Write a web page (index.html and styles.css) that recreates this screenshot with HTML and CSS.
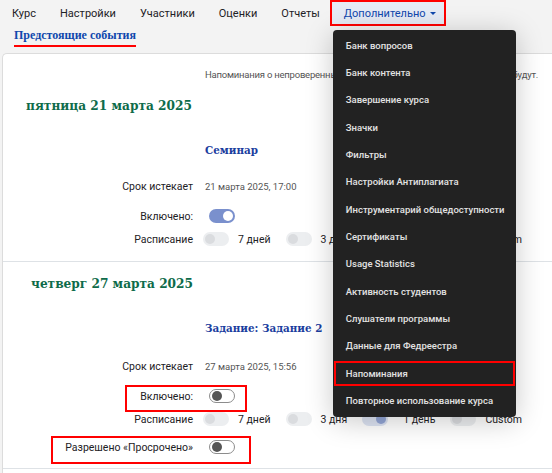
FILE: index.html
```html
<!DOCTYPE html>
<html lang="ru">
<head>
<meta charset="utf-8">
<title>Предстоящие события</title>
<link rel="stylesheet" href="styles.css">
</head>
<body>
<div class="page">
  <nav class="secnav">
    <ul class="tabs">
      <li class="tab">Курс</li>
      <li class="tab">Настройки</li>
      <li class="tab">Участники</li>
      <li class="tab">Оценки</li>
      <li class="tab">Отчеты</li>
      <li class="tab tab-more">Дополнительно <span class="caret"></span>
        <ul class="menu">
          <li class="menu-item">Банк вопросов</li>
          <li class="menu-item">Банк контента</li>
          <li class="menu-item">Завершение курса</li>
          <li class="menu-item">Значки</li>
          <li class="menu-item">Фильтры</li>
          <li class="menu-item">Настройки Антиплагиата</li>
          <li class="menu-item">Инструментарий общедоступности</li>
          <li class="menu-item">Сертификаты</li>
          <li class="menu-item">Usage Statistics</li>
          <li class="menu-item">Активность студентов</li>
          <li class="menu-item">Слушатели программы</li>
          <li class="menu-item">Данные для Федреестра</li>
          <li class="menu-item menu-item-hl">Напоминания</li>
          <li class="menu-item">Повторное использование курса</li>
        </ul>
      </li>
    </ul>
    <div class="tertiary"><span class="upcoming">Предстоящие события</span></div>
  </nav>

  <main class="card">
    <p class="notice">Напоминания о непроверенных заданиях, у которых уже истёк срок, не будут.</p>

    <h2 class="day">пятница 21 марта 2025</h2>
    <h3 class="event">Семинар</h3>
    <div class="row row-due">
      <span class="label">Срок истекает</span>
      <span class="value">21 марта 2025, 17:00</span>
    </div>
    <div class="row row-enabled">
      <span class="label">Включено:</span>
      <span class="value"><span class="tgl tgl-on"></span></span>
    </div>
    <div class="row row-sched">
      <span class="label">Расписание</span>
      <span class="value opts">
        <span class="opt"><span class="tgl tgl-dis"></span>7 дней</span>
        <span class="opt"><span class="tgl tgl-dis"></span>3 дня</span>
        <span class="opt opt-day"><span class="tgl tgl-dis-on"></span>1 день</span>
        <span class="opt"><span class="tgl tgl-dis"></span>Custom</span>
      </span>
    </div>
    <hr class="sep">

    <h2 class="day day-2">четверг 27 марта 2025</h2>
    <h3 class="event">Задание: Задание 2</h3>
    <div class="row row-due row-due-2">
      <span class="label">Срок истекает</span>
      <span class="value">27 марта 2025, 15:56</span>
    </div>
    <div class="row row-enabled mark mark-enabled">
      <span class="label">Включено:</span>
      <span class="value"><span class="tgl tgl-off"></span></span>
    </div>
    <div class="row row-sched">
      <span class="label">Расписание</span>
      <span class="value opts">
        <span class="opt"><span class="tgl tgl-dis"></span>7 дней</span>
        <span class="opt"><span class="tgl tgl-dis"></span>3 дня</span>
        <span class="opt opt-day"><span class="tgl tgl-dis-on"></span>1 день</span>
        <span class="opt"><span class="tgl tgl-dis"></span>Custom</span>
      </span>
    </div>
    <div class="row row-overdue mark mark-overdue">
      <span class="label">Разрешено «Просрочено»</span>
      <span class="value"><span class="tgl tgl-off"></span></span>
    </div>
    <hr class="sep sep-2">
  </main>
</div>
</body>
</html>
```

FILE: styles.css
```css
* { box-sizing: border-box; }
html, body { margin: 0; padding: 0; }
body {
  width: 552px;
  height: 473px;
  overflow: hidden;
  background: #f3f3f3;
  font-family: Roboto, "Noto Sans", sans-serif;
  color: #1d2125;
}
ul { list-style: none; margin: 0; padding: 0; }
p, h2, h3 { margin: 0; }

.secnav { height: 53px; }
.tabs {
  display: flex;
  height: 25px;
  padding-top: 2px;
}
.tab {
  height: 22px;
  display: flex;
  align-items: center;
  padding: 0 12px;
  font-size: 11px;
  color: #1d2125;
  white-space: nowrap;
}
.tab-more {
  position: relative;
  padding-right: 8px;
  background: #e6ebf5;
  color: #0f47ad;
  outline: 2.5px solid #f00;
  outline-offset: 0;
  gap: 3px;
}
.caret {
  width: 0; height: 0;
  border-left: 3px solid transparent;
  border-right: 3px solid transparent;
  border-top: 3px solid #0f47ad;
  margin-left: 1px;
}
.menu {
  position: absolute;
  left: 1px;
  top: 28px;
  width: 183px;
  padding: 1.5px 0 3px;
  background: #222222;
  border-radius: 4px;
  box-shadow: 0 4px 28px rgba(0,0,0,0.22);
  z-index: 10;
}
.menu-item {
  height: 27.35px;
  display: flex;
  align-items: center;
  padding-left: 13px;
  font-size: 9.5px;
  font-weight: 500;
  color: #e2e2e2;
  white-space: nowrap;
}
.menu-item-hl {
  outline: 2.5px solid #f00;
  outline-offset: -3px;
}

.tertiary {
  height: 28px;
  display: flex;
  align-items: flex-start;
  padding-left: 14px;
  padding-top: 3px;
}
.upcoming {
  font-family: "Liberation Serif", serif;
  font-weight: bold;
  font-size: 12px;
  color: #0f47ad;
  padding-bottom: 2px;
  border-bottom: 2.5px solid #f00;
}

.card {
  margin-left: 2px;
  background: #fff;
  border-top: 1px solid #dcdcdc;
  border-left: 1px solid #dcdcdc;
  border-top-left-radius: 5px;
  height: 420px;
  padding-top: 15px;
}
.notice {
  height: 12px;
  margin-left: 202px;
  font-size: 9.5px;
  line-height: 12px;
  letter-spacing: -0.22px;
  color: #555;
  white-space: nowrap;
}
.day {
  height: 20px;
  margin-top: 14px;
  padding-left: 23px;
  font-family: "DejaVu Serif Condensed", "DejaVu Serif", serif;
  font-stretch: condensed;
  font-weight: bold;
  font-size: 13.5px;
  line-height: 20px;
  color: #0e6b4a;
}
.day-2 { padding-left: 28px; margin-top: 11px; }
.event {
  height: 18px;
  margin-top: 26px;
  margin-left: 202px;
  font-family: "DejaVu Serif Condensed", "DejaVu Serif", serif;
  font-stretch: condensed;
  font-weight: bold;
  font-size: 11.5px;
  line-height: 18px;
  color: #1a3d9e;
}
.row {
  display: flex;
  align-items: center;
  gap: 12px;
  height: 20px;
  font-size: 10.5px;
}
.label {
  width: 190px;
  flex: none;
  text-align: right;
  white-space: nowrap;
}
.value { display: flex; align-items: center; white-space: nowrap; }
.row-due { margin-top: 17px; }
.row-due-2 { margin-top: 19px; }
.row-due .value { font-size: 9.5px; color: #555; }
.row-enabled { margin-top: 10px; }
.row-sched { margin-top: 3px; }
.row-overdue { margin-top: 8px; }
.row-enabled .tgl, .row-overdue .tgl { margin-left: 4px; }

.opts { margin-left: -2px; gap: 15px; }
.opt { display: flex; align-items: center; gap: 9px; }
.opt-day { gap: 15px; }

.tgl {
  position: relative;
  display: inline-block;
  width: 26px;
  height: 14px;
  border-radius: 7px;
  flex: none;
}
.tgl::before {
  content: "";
  position: absolute;
  top: 2px;
  width: 10px;
  height: 10px;
  border-radius: 50%;
}
.tgl-on { background: #7a90cd; }
.tgl-on::before { right: 2px; background: #fff; }
.tgl-off { background: #fff; border: 1px solid #8c8c8c; }
.tgl-off::before { left: 2px; top: 1px; background: #555; }
.tgl-dis { background: #eceef0; }
.tgl-dis::before { left: 2px; background: #dadcdf; }
.tgl-dis-on { background: #dde4f3; }
.tgl-dis-on::before { right: 2px; background: #93a6d6; }

.mark { position: relative; }
.mark::after {
  content: "";
  position: absolute;
  border: 2.5px solid #f00;
  pointer-events: none;
}
.mark-enabled::after { left: 122px; top: -1px; width: 118px; height: 23px; }
.mark-overdue::after { left: 48px; top: -1px; width: 196px; height: 24px; }

.sep {
  margin: 12px 0 0;
  border: 0;
  border-top: 1px solid #dee2e6;
  height: 0;
}
.sep-2 { margin-top: 11px; }
```
